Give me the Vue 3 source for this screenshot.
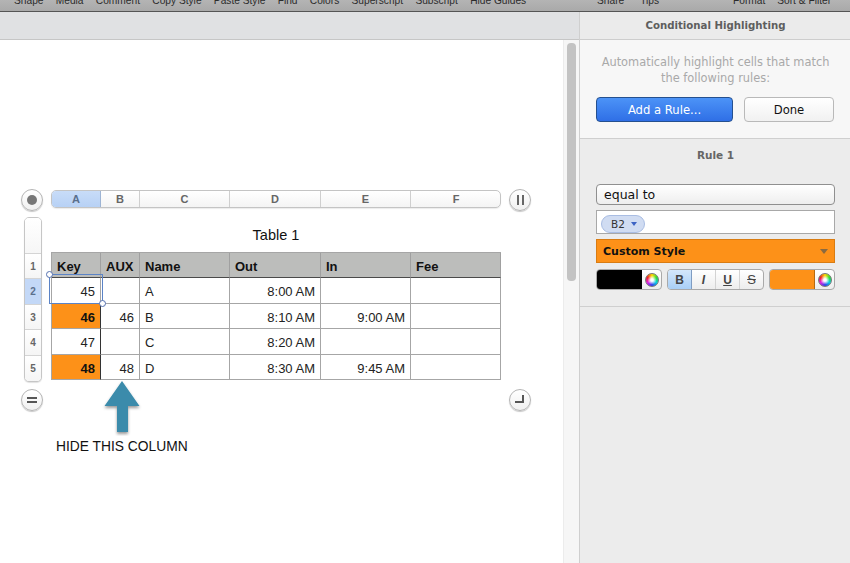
<script setup>
const leftTools = ['Shape','Media','Comment','Copy Style','Paste Style','Find','Colors','Superscript','Subscript','Hide Guides']
const midTools = ['Share','Tips']
const rightTools = ['Format','Sort & Filter']
const cols = [
  { name: 'A', active: true }, { name: 'B' }, { name: 'C' }, { name: 'D' }, { name: 'E' }, { name: 'F' }
]
const heads = ['Key','AUX','Name','Out','In','Fee']
const rows = [
  { n: 2, key: '45', aux: '', name: 'A', out: '8:00 AM', inn: '', active: true },
  { n: 3, key: '46', aux: '46', name: 'B', out: '8:10 AM', inn: '9:00 AM', hit: true },
  { n: 4, key: '47', aux: '', name: 'C', out: '8:20 AM', inn: '' },
  { n: 5, key: '48', aux: '48', name: 'D', out: '8:30 AM', inn: '9:45 AM', hit: true }
]
</script>

<template>
  <div class="app">
    <header class="toolbar">
      <div class="tools left"><span v-for="t in leftTools" :key="t">{{ t }}</span></div>
      <div class="tools mid"><span v-for="t in midTools" :key="t">{{ t }}</span></div>
      <div class="tools right"><span v-for="t in rightTools" :key="t">{{ t }}</span></div>
    </header>
    <div class="workspace">
      <main class="doc">
        <div class="docbar"></div>
        <div class="canvasrow">
          <div class="canvas">
            <div class="sheet">
              <div class="round"><span class="dot"></span></div>
              <div class="colhead">
                <div v-for="c in cols" :key="c.name" class="colcell" :class="{ on: c.active }">{{ c.name }}</div>
              </div>
              <div class="round"><span class="pause"><i></i><i></i></span></div>

              <div class="rail">
                <div class="railtop"></div>
                <div class="railcell r1">1</div>
                <div v-for="r in rows" :key="r.n" class="railcell" :class="[{ on: r.active }, 'h' + r.n]">{{ r.n }}</div>
              </div>
              <div class="tablewrap">
                <div class="title">Table 1</div>
                <div class="grid">
                  <div v-for="h in heads" :key="h" class="th">{{ h }}</div>
                  <template v-for="r in rows" :key="r.n">
                    <div class="td num" :class="[{ hit: r.hit }, 'h' + r.n]">{{ r.key }}</div>
                    <div class="td num aux" :class="'h' + r.n">{{ r.aux }}</div>
                    <div class="td" :class="'h' + r.n">{{ r.name }}</div>
                    <div class="td num" :class="'h' + r.n">{{ r.out }}</div>
                    <div class="td num" :class="'h' + r.n">{{ r.inn }}</div>
                    <div class="td" :class="'h' + r.n"></div>
                  </template>
                  <div class="selection"><span class="handle tl"></span><span class="handle br"></span></div>
                </div>
              </div>
              <div></div>

              <div class="round low"><span class="equals"><i></i><i></i></span></div>
              <div class="note">
                <svg class="arrow" width="50" height="56" viewBox="0 0 50 56">
                  <defs>
                    <filter id="as" x="-20%" y="-20%" width="140%" height="140%">
                      <feDropShadow dx="0" dy="2" stdDeviation="1.6" flood-color="#000" flood-opacity="0.4" />
                    </filter>
                  </defs>
                  <path d="M25 1 L42.5 26 L31 26 L31 52 L20 52 L20 26 L7.5 26 Z" fill="#3a8bab" filter="url(#as)" />
                </svg>
                <div class="notetext">HIDE THIS COLUMN</div>
              </div>
              <div class="round low"><span class="corner"></span></div>
            </div>
          </div>
          <div class="scroll"><div class="thumb"></div></div>
        </div>
      </main>
      <aside class="panel">
        <div class="panelhead">Conditional Highlighting</div>
        <section class="intro">
          <p>Automatically highlight cells that match<br>the following rules:</p>
          <div class="btns">
            <button class="btn primary">Add a Rule...</button>
            <button class="btn plain">Done</button>
          </div>
        </section>
        <section class="rule">
          <div class="ruletitle">Rule 1</div>
          <div class="select">equal to</div>
          <div class="field"><span class="token">B2 <i class="tri"></i></span></div>
          <div class="style">Custom Style<i class="tri2"></i></div>
          <div class="fmt">
            <div class="well w1"><span class="swatch black"></span><span class="wheelbox"><span class="wheel"></span></span></div>
            <div class="seg">
              <span class="b on">B</span>
              <span class="i">I</span>
              <span class="u">U</span>
              <span class="s">S</span>
            </div>
            <div class="well w2"><span class="swatch orange"></span><span class="wheelbox"><span class="wheel"></span></span></div>
          </div>
        </section>
      </aside>
    </div>
  </div>
</template>

<style>
html, body { margin: 0; padding: 0; background: #fff; overflow: hidden; }
</style>

<style scoped>
.app { width: 850px; height: 563px; overflow: hidden; display: flex; flex-direction: column; font-family: "Liberation Sans", Arial, sans-serif; color: #111; }
.toolbar { height: 12px; box-sizing: border-box; flex: none; background: linear-gradient(#b4b4b4, #a9a9a9); border-bottom: 1px solid #555; display: flex; overflow: hidden; position: relative; }
.tools { display: flex; height: 11px; align-items: flex-end; font-size: 10.2px; color: #2c2c2c; white-space: nowrap; }
.tools span { display: block; line-height: 13px; margin-bottom: 4px; flex: none; }
.left { width: 597px; padding-left: 14px; box-sizing: border-box; gap: 0 12.3px; }
.mid { width: 136px; gap: 16px; box-sizing: border-box; }
.right { gap: 12px; }
.workspace { flex: 1; display: flex; min-height: 0; }
.doc { width: 580px; flex: none; display: flex; flex-direction: column; border-right: 1px solid #cfcfcf; box-sizing: border-box; }
.docbar { height: 28px; box-sizing: border-box; flex: none; background: #e0e1e3; border-bottom: 1px solid #c6c6c6; }
.canvasrow { flex: 1; display: flex; min-height: 0; }
.canvas { width: 563px; flex: none; background: #fff; }
.scroll { flex: 1; background: #f6f6f6; border-left: 1px solid #ececec; position: relative; box-sizing: border-box; padding: 3px 3px 0 3px; }
.thumb { width: 9px; height: 238px; background: #c3c3c3; border-radius: 4px; }
.sheet { display: grid; grid-template-columns: 20px 450px 20px; column-gap: 9px; padding: 150px 0 0 22px; align-items: start; }
.round { width: 22px; height: 22px; margin: -1px; border-radius: 50%; background: linear-gradient(#ffffff, #f0f0f0); border: 1px solid #b5b5b5; box-shadow: 0 1px 1px rgba(0,0,0,.22); display: flex; align-items: center; justify-content: center; box-sizing: border-box; }
.low { margin-top: 7px; }
.dot { width: 10px; height: 10px; border-radius: 50%; background: #777; }
.pause { display: flex; gap: 3px; }
.pause i { width: 2px; height: 10px; background: #666; display: block; }
.equals { display: flex; flex-direction: column; gap: 2px; }
.equals i { width: 10px; height: 2px; background: #555; display: block; }
.corner { width: 9px; height: 8px; border-right: 2px solid #555; border-bottom: 2px solid #555; margin: -2px 0 0 -1px; box-sizing: border-box; }
.colhead { display: grid; grid-template-columns: 49px 39px 90px 91px 90px 90px; height: 18px; border: 1px solid #c4c4c4; border-radius: 5px; box-sizing: border-box; overflow: hidden; background: linear-gradient(#fff, #f4f4f4); box-shadow: 0 1px 1px rgba(0,0,0,.08); }
.colcell { border-right: 1px solid #cfcfcf; text-align: center; font-size: 11px; font-weight: bold; line-height: 16px; color: #666; }
.colcell:last-child { border-right: 0; }
.colcell.on { background: linear-gradient(#c8dcf8, #b7d1f5); color: #5a6f8c; border-right-color: #9db4d4; }
.rail { width: 18px; margin: 7px 0 0 2px; border: 1px solid #c6c6c6; border-radius: 5px; box-sizing: border-box; background: #fff; overflow: hidden; box-shadow: 0 1px 1px rgba(0,0,0,.12); }
.railtop { height: 35px; background: linear-gradient(#fff, #f6f6f6); border-bottom: 1px solid #d4d4d4; }
.railcell { text-align: center; font-size: 10px; font-weight: bold; color: #666; background: linear-gradient(#fff, #f5f5f5); border-bottom: 1px solid #d4d4d4; box-sizing: border-box; display: flex; align-items: center; justify-content: center; }
.railcell:last-child { border-bottom: 0; }
.r1 { height: 25px; }
.railcell.on { background: #c3d8f7; color: #5a6f8c; }
.tablewrap { margin-top: 7px; }
.title { height: 35px; text-align: center; font-size: 14.5px; line-height: 36px; color: #111; }
.grid { position: relative; display: grid; grid-template-columns: 49px 39px 90px 91px 90px 90px; width: 450px; box-sizing: border-box; border-left: 1px solid #a6a6a6; border-top: 1px solid #a6a6a6; }
.th { height: 25px; box-sizing: border-box; background: #bcbdbb; border-right: 1px solid #a0a0a0; border-bottom: 1px solid #4a4a4a; font-size: 13px; font-weight: bold; line-height: 28px; padding-left: 5px; color: #111; }
.td { box-sizing: border-box; border-right: 1px solid #a6a6a6; border-bottom: 1px solid #a6a6a6; font-size: 13px; padding: 0 5px; color: #222; display: flex; align-items: center; padding-top: 2px; }
.h2 { height: 26px; }
.h3 { height: 25px; }
.h4 { height: 26px; }
.h5 { height: 25px; }
.railcell.h2 { height: 26px; }
.railcell.h3 { height: 25px; }
.railcell.h4 { height: 26px; }
.railcell.h5 { height: 25px; }
.num { justify-content: flex-end; }
.hit { background: #fd9118; font-weight: bold; color: #111; border-right-color: #333; }
.td:nth-child(6n+1).h4 { border-right-color: #333; }
.selection { position: absolute; left: -3px; top: 21px; width: 54px; height: 30px; border: 1px solid #5b83c6; box-sizing: border-box; pointer-events: none; }
.handle { position: absolute; width: 7px; height: 7px; border-radius: 50%; background: #fff; border: 1px solid #5470b0; box-sizing: border-box; }
.tl { left: -4px; top: -4px; }
.br { right: -4px; bottom: -4px; }
.note { padding-left: 5px; }
.arrow { display: block; margin: -2px 0 0 41px; }
.notetext { margin-top: 3px; font-size: 13.8px; line-height: 16px; color: #111; }
.panel { flex: 1; display: flex; flex-direction: column; background: #ececec; font-family: "DejaVu Sans", sans-serif; }
.panelhead { height: 28px; flex: none; box-sizing: border-box; background: #ebebeb; border-bottom: 1px solid #cdcdcd; text-align: center; font-size: 10.2px; font-weight: bold; line-height: 27px; color: #5e5e5e; }
.intro { height: 99px; flex: none; box-sizing: border-box; background: #f7f7f7; border-bottom: 1px solid #cfcfcf; padding-top: 14px; }
.intro p { margin: 0; text-align: center; font-size: 11.4px; line-height: 16px; color: #a9a9a9; }
.btns { display: flex; margin-top: 11px; padding-left: 16px; gap: 11px; }
.btn { font-family: inherit; height: 25px; font-size: 11.6px; border-radius: 4px; padding: 0; box-sizing: border-box; }
.primary { width: 137px; background: linear-gradient(#4c93f7, #2f6fe6); border: 1px solid #25508f; color: #fff; }
.plain { width: 90px; background: linear-gradient(#fff, #f1f1f1); border: 1px solid #b9b9b9; color: #111; }
.rule { height: 168px; flex: none; box-sizing: border-box; border-bottom: 1px solid #cfcfcf; padding: 0 16px; display: flex; flex-direction: column; }
.ruletitle { text-align: center; font-size: 10.5px; font-weight: bold; line-height: 14px; margin-top: 9px; color: #666; }
.select { margin-top: 22px; height: 21px; box-sizing: border-box; border: 1px solid #8f8f8f; border-radius: 4px; background: linear-gradient(#fff, #eee); font-size: 12.5px; line-height: 19px; padding-left: 7px; color: #111; }
.field { margin-top: 5px; height: 24px; box-sizing: border-box; border: 1px solid #a8a8a8; background: #fff; padding: 2px 0 0 4px; }
.token { display: inline-flex; align-items: center; gap: 6px; height: 18px; width: 44px; box-sizing: border-box; padding-left: 9px; border-radius: 9px; background: #d0dcf2; border: 1px solid #a9bde3; font-size: 10.5px; color: #333; }
.tri { width: 0; height: 0; border-left: 3.5px solid transparent; border-right: 3.5px solid transparent; border-top: 4px solid #3c63c4; }
.style { margin-top: 5px; height: 24px; box-sizing: border-box; background: #fd9118; border: 1px solid #d97c12; font-size: 11px; font-weight: bold; line-height: 22px; padding: 1px 6px 0; color: #111; display: flex; justify-content: space-between; align-items: center; }
.tri2 { width: 0; height: 0; border-left: 4px solid transparent; border-right: 4px solid transparent; border-top: 5px solid #8a6a40; }
.fmt { display: flex; margin-top: 6px; gap: 5px; }
.well { height: 21px; display: flex; border-radius: 4px; overflow: hidden; box-sizing: border-box; border: 1px solid #a9a9a9; background: linear-gradient(#fff, #ededed); }
.w1 { width: 66px; }
.w2 { width: 66px; }
.swatch { flex: 1; display: block; }
.black { background: #000; margin: -1px 0 -1px -1px; }
.orange { background: #fd9118; border-right: 1px solid #b56a10; }
.wheelbox { width: 19px; flex: none; display: flex; align-items: center; justify-content: center; }
.wheel { width: 14px; height: 14px; border-radius: 50%; background: radial-gradient(circle at 50% 50%, #fff 0 15%, rgba(255,255,255,0) 55%), conic-gradient(#ffe000, #30e030, #00d0e0, #3040f0, #e020e0, #f02020, #ffe000); border: 1px solid #777; box-sizing: border-box; }
.seg { width: 97px; height: 21px; box-sizing: border-box; display: grid; grid-template-columns: 24px 24px 24px 1fr; border: 1px solid #a9a9a9; border-radius: 4px; background: linear-gradient(#fff, #ededed); overflow: hidden; }
.seg span { display: flex; align-items: center; justify-content: center; font-size: 12px; font-family: "Liberation Sans", sans-serif; color: #444; border-right: 1px solid #d3d3d3; font-weight: bold; }
.seg span:last-child { border-right: 0; }
.seg .on { background: linear-gradient(#d4e7fb, #a9cff6); border-right-color: #7f9cc2; }
.seg .i { font-style: italic; }
.seg .u { text-decoration: underline; }
.seg .s { text-decoration: line-through; font-weight: normal; font-size: 13px; }
</style>
